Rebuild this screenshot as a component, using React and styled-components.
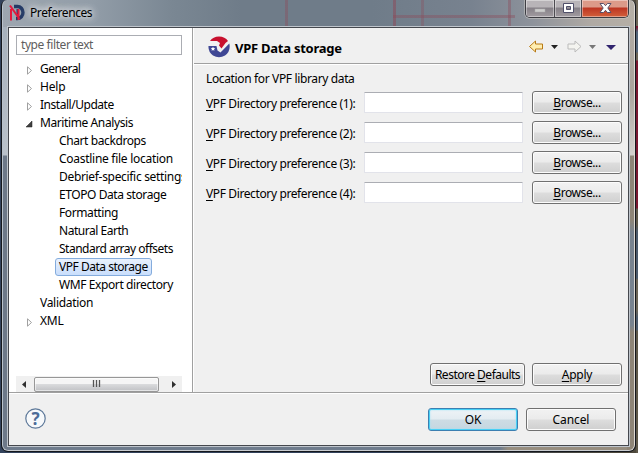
import React from 'react';
import styled, { createGlobalStyle, css } from 'styled-components';

const Global = createGlobalStyle`
  * { box-sizing: border-box; }
  body { margin: 0; overflow: hidden; font: 12px/18px "Noto Sans", "Open Sans", sans-serif; color: #000; }
  u { text-decoration: underline; text-underline-offset: 2px; text-decoration-thickness: 1px; text-decoration-skip-ink: none; }
`;

const Desktop = styled.div`
  width: 638px;
  height: 453px;
  padding: 0 2px 1px 1px;
  background:
    linear-gradient(#6b6455 0 26px, #7a1830 26px 27px, #526478 32px 52px, #6b6455 53px 60px, #7a1830 61px 208px, #5d5748 209px 225px, #4b5a6c 232px 278px, #6b6455 280px 310px, #4b5a6c 318px 330px, #5d5748 331px) 100% 0 / 2px 100% no-repeat,
    linear-gradient(90deg, #33435c 0 60%, #4d483c 97%);
`;

const Dialog = styled.div`
  width: 635px;
  height: 452px;
  display: flex;
  flex-direction: column;
  padding: 0 6px 5px 6px;
  border: 1px solid #15181d;
  border-top: 0;
  border-radius: 6px 6px 7px 7px;
  box-shadow: inset 1px 0 #b9c2cc, inset -1px 0 #dcd8d2, inset 0 -1px #c9ccd0;
  background:
    linear-gradient(90deg, #9da6b0 0, #929da8 90px, #7a8793 170px, #6f7c89 240px 370px, #78828f 470px, #8d929b 530px, #b0aaa4 590px, #b5afa6) 0 0 / 100% 27px no-repeat,
    linear-gradient(#a2adb9, #b9c1ca 155px, #6d7989 156px) 0 0 / 8px 100% no-repeat,
    linear-gradient(#b5afa6, #aaa49c 90px, #d4d1cd 155px, #8e8577 156px 220px, #78838f 232px 325px, #8e8577 332px) 100% 0 / 8px 100% no-repeat,
    linear-gradient(90deg, #6f7c8d 498px, #968d7f 506px);
`;

const TitleBar = styled.header`
  height: 27px;
  flex: none;
  display: flex;
  align-items: flex-start;
  padding-left: 1px;
  background:
    linear-gradient(#8b4b5a66, #8b4b5a66) 277px 0 / 3px 26px no-repeat,
    linear-gradient(#8b4b5a88, #8b4b5a88) 385px 0 / 3px 26px no-repeat,
    linear-gradient(#8b4b5a55, #8b4b5a55) 413px 0 / 3px 26px no-repeat,
    linear-gradient(#8b4b5a66, #8b4b5a66) 385px 15px / 122px 3px no-repeat,
    linear-gradient(#8b4b5a66, #8b4b5a66) 500px 0 / 3px 26px no-repeat;
`;

const AppIcon = styled.svg`
  width: 16px;
  height: 17px;
  margin-top: 4px;
`;

const Title = styled.span`
  margin: 4px 0 0 5px;
  letter-spacing: -0.42px;
  text-shadow: 0 0 6px #ffffffcc, 0 0 9px #ffffffcc, 0 0 12px #ffffff99;
`;

const WindowControls = styled.div`
  display: flex;
  width: 104px;
  height: 18px;
  margin-left: auto;
  border: 1px solid #3d3d43;
  border-top: 0;
  border-radius: 0 0 5px 5px;
  box-shadow: 0 0 0 1px #d0cdca80;
  overflow: hidden;
`;

const Control = styled.div`
  width: ${p => p.$w}px;
  display: flex;
  justify-content: center;
  border-right: ${p => (p.$close ? '0' : '1px solid #4c4a50')};
  box-shadow: inset 0 0 0 1px #ffffff66;
  background: ${p => p.$close
    ? 'linear-gradient(#dc9a89 0 7px, #bd3522 8px, #d2603b)'
    : 'linear-gradient(#b8b4b8 0 7px, #858087 8px, #a29ca1)'};
  svg { display: block; }
`;

const Client = styled.main`
  flex: 1;
  min-height: 0;
  display: flex;
  flex-direction: column;
  border: 1px solid #45484e;
  box-shadow: 0 0 0 1px #bfc5cc;
  background: #f0f0f0;
`;

const Body = styled.div`
  height: 365px;
  flex: none;
  display: flex;
  border-bottom: 1px solid #a0a0a0;
`;

const Sidebar = styled.aside`
  width: 184px;
  padding: 7px 10px 0 7px;
  display: flex;
  flex-direction: column;
  border-right: 1px solid #a0a0a0;
  background: #fff;
`;

const Filter = styled.div`
  height: 20px;
  flex: none;
  padding: 0 4px;
  border: 1px solid #abadb3;
  color: #5e5e5e;
  letter-spacing: -0.42px;
`;

const Tree = styled.div`
  flex: 1;
  padding-top: 5px;
  overflow: hidden;
`;

const TreeRow = styled.div`
  height: 18px;
  display: flex;
  align-items: center;
  padding-left: ${p => (p.$child ? 39 : 10)}px;
  white-space: nowrap;
`;

const Twisty = styled.svg`
  width: 7px;
  height: 9px;
  flex: none;
  margin: 2px 3px 0 0;
`;

const Label = styled.span`
  flex: none;
  height: 18px;
  line-height: 16px;
  padding: 0 3px;
  border: 1px solid transparent;
  border-radius: 3px;
  letter-spacing: ${p => p.$ls ?? -0.4}px;
  ${p => p.$selected && css`
    border-color: #84acdd;
    background: linear-gradient(#e9f1fd, #c9defc);
  `}
`;

const Scrollbar = styled.div`
  height: 16px;
  flex: none;
  display: flex;
  align-items: center;
  background: #f0f0f0;
`;

const Thumb = styled.div`
  width: 125px;
  height: 15px;
  display: flex;
  align-items: center;
  justify-content: center;
  border: 1px solid #979797;
  border-radius: 2px;
  box-shadow: inset 0 0 0 1px #ffffff90;
  background: linear-gradient(#f5f5f5 0 45%, #d9dadc 50%, #c0c1c4);
`;

const ScrollArrow = styled.svg`
  width: 18px;
  height: 15px;
  margin-left: ${p => (p.$end ? 'auto' : '0')};
`;

const Page = styled.section`
  flex: 1;
  display: flex;
  flex-direction: column;
  border-left: 1px solid #fff;
`;

const PageHeader = styled.div`
  height: 36px;
  flex: none;
  display: flex;
  align-items: center;
  padding: 2px 12px 0 14px;
  border-bottom: 1px solid #a0a0a0;
  box-shadow: 0 1px #fff;
`;

const Heading = styled.h1`
  margin: 3px 0 0 5px;
  font-size: 13px;
  line-height: 18px;
  letter-spacing: -0.25px;
`;

const NavTools = styled.svg`
  width: 88px;
  height: 14px;
  margin: -1px 0 0 auto;
`;

const Intro = styled.div`
  margin: 6px 0 3px 12px;
  letter-spacing: -0.36px;
`;

const FieldRow = styled.div`
  height: 30px;
  display: flex;
  align-items: flex-start;
  padding-left: 12px;
`;

const FieldLabel = styled.label`
  width: 158px;
  margin-top: 4px;
  letter-spacing: -0.38px;
  white-space: nowrap;
`;

const Input = styled.div`
  width: 159px;
  height: 21px;
  margin: 1px 9px 0 0;
  border: 1px solid #e2e3ea;
  border-top-color: #abadb3;
  border-radius: 1px;
  background: #fff;
`;

const Button = styled.div`
  width: ${p => p.$w ?? 90}px;
  height: 23px;
  flex: none;
  text-align: center;
  line-height: 22px;
  letter-spacing: ${p => p.$ls ?? -0.1}px;
  white-space: nowrap;
  border: 1px solid #707070;
  border-radius: 3px;
  box-shadow: inset 0 0 0 1px #fcfcfc;
  background: linear-gradient(#f2f2f2 0, #ebebeb 48%, #dddddd 52%, #cfcfcf);
  ${p => p.$primary && css`
    border-color: #3c7fb1;
    box-shadow: inset 0 0 0 1px #48d0f5, inset 0 0 2px 1px #9de3f7;
    background: linear-gradient(#eef3f6 0, #e3ecf1 48%, #cddce4 52%, #c5d6e0);
  `}
`;

const PageActions = styled.div`
  margin: auto 6px 6px auto;
  display: flex;
  gap: 7px;
`;

const Footer = styled.footer`
  flex: 1;
  display: flex;
  align-items: center;
  gap: 8px;
  padding: 0 12px 0 16px;
  box-shadow: inset 0 1px #fff;
`;

const Help = styled.svg`
  width: 21px;
  height: 21px;
  margin: -2px auto 0 0;
`;

const HelpMark = styled.text`
  font: bold 17px "Noto Sans", sans-serif;
  fill: #4d6c98;
`;

const NODES = [
  { text: 'General', icon: 'closed', ls: -0.55 },
  { text: 'Help', icon: 'closed', ls: -0.2 },
  { text: 'Install/Update', icon: 'closed', ls: -0.47 },
  { text: 'Maritime Analysis', icon: 'open' },
  { text: 'Chart backdrops', child: true },
  { text: 'Coastline file location', child: true, ls: -0.28 },
  { text: 'Debrief-specific settings', child: true, ls: -0.32 },
  { text: 'ETOPO Data storage', child: true, ls: -0.42 },
  { text: 'Formatting', child: true },
  { text: 'Natural Earth', child: true, ls: -0.47 },
  { text: 'Standard array offsets', child: true, ls: -0.5 },
  { text: 'VPF Data storage', child: true, selected: true, ls: -0.48 },
  { text: 'WMF Export directory', child: true },
  { text: 'Validation', icon: 'none', ls: -0.3 },
  { text: 'XML', icon: 'closed', ls: -0.2 },
];

const Expander = ({ kind }) => (
  <Twisty viewBox="0 0 7 9">
    {kind === 'closed' && <path d="M1.5.8v7.4l4-3.7z" fill="#fff" stroke="#a0a0a0" />}
    {kind === 'open' && <path d="M6 1v6H0z" fill="#404040" stroke="#222" strokeWidth=".5" />}
  </Twisty>
);

export default function App() {
  return (
    <>
      <Global />
      <Desktop>
        <Dialog>
          <TitleBar>
            <AppIcon viewBox="0 0 16 17">
              <path d="M5 2.500h3.500a5.500 6 0 0 1 0 12H7" fill="none" stroke="#243a66" strokeWidth="3.400" />
              <path d="M8.500 5v6" stroke="#243a66" strokeWidth="2" />
              <path d="M2 16.500V5M1 1.500l9.500 13.500M9.500 16V5" fill="none" stroke="#e4183c" strokeWidth="2" />
            </AppIcon>
            <Title>Preferences</Title>
            <WindowControls>
              <Control $w={29}>
                <svg width="12" height="17"><rect x="1" y="9" width="10" height="3" fill="#ccc" stroke="#aaa" strokeWidth=".5" /></svg>
              </Control>
              <Control $w={27}>
                <svg width="13" height="17"><path d="M1.500 3.500h10v9h-10zM4.500 6.500v3h4v-3z" fill="#fff" fillRule="evenodd" stroke="#50506a" /></svg>
              </Control>
              <Control $w={46} $close>
                <svg width="13" height="17"><path d="M1 3.500h3.500l2 2.200 2-2.200H12L8.800 8 12 12.500H8.500l-2-2.200-2 2.200H1L4.200 8z" fill="#fff" stroke="#59506a" /></svg>
              </Control>
            </WindowControls>
          </TitleBar>
          <Client>
            <Body>
              <Sidebar>
                <Filter>type filter text</Filter>
                <Tree>
                  {NODES.map(n => (
                    <TreeRow key={n.text} $child={n.child}>
                      {!n.child && <Expander kind={n.icon} />}
                      <Label $selected={n.selected} $ls={n.ls}>{n.text}</Label>
                    </TreeRow>
                  ))}
                </Tree>
                <Scrollbar>
                  <ScrollArrow viewBox="0 0 18 15"><path d="M10 4v7L6 7.500z" fill="#303030" /></ScrollArrow>
                  <Thumb>
                    <svg width="9" height="8"><path d="M1.500 0v7M4.500 0v7M7.500 0v7" stroke="#555" strokeWidth="1.300" /></svg>
                  </Thumb>
                  <ScrollArrow $end viewBox="0 0 18 15"><path d="M8 4v7l4-3.500z" fill="#303030" /></ScrollArrow>
                </Scrollbar>
              </Sidebar>
              <Page>
                <PageHeader>
                  <svg width="22" height="22" viewBox="0 0 22 22">
                    <path d="M2 5Q5 .5 11 .5T20 5l-2.500 2-4 5.500-2.500-3 1-2.500-3-2H2z" fill="#c8102e" />
                    <path d="M.5 10h8l1 4.500 3 2L21.300 7.500Q23 15 17 19.500q-6 3.500-12 0Q0 16 .5 10z" fill="#3f4794" />
                    <path d="M5 10.800l.7 1.300 1.500.2-1.100 1 .3 1.500L5 14l-1.400.8.3-1.500-1.100-1 1.500-.2z" fill="#fff" />
                  </svg>
                  <Heading>VPF Data storage</Heading>
                  <NavTools viewBox="0 0 88 14">
                    <path d="M1.500 7.500l6-5.500v3h7v5h-7v3z" fill="#ffeeb0" stroke="#b87a14" />
                    <path d="M23 6h7l-3.500 4z" fill="#222" />
                    <path d="M53 7.500L47 2v3h-7v5h7v3z" fill="#f4f4f0" stroke="#bbb" />
                    <path d="M61 6h7l-3.500 4z" fill="#777" />
                    <path d="M78 6h10l-5 5z" fill="#30246e" />
                  </NavTools>
                </PageHeader>
                <Intro>Location for VPF library data</Intro>
                {[1, 2, 3, 4].map(n => (
                  <FieldRow key={n}>
                    <FieldLabel><u>V</u>PF Directory preference ({n}):</FieldLabel>
                    <Input />
                    <Button $ls={-0.42}><u>B</u>rowse...</Button>
                  </FieldRow>
                ))}
                <PageActions>
                  <Button $w={95} $ls={-0.5}>Restore <u>D</u>efaults</Button>
                  <Button $ls={-0.25}><u>A</u>pply</Button>
                </PageActions>
              </Page>
            </Body>
            <Footer>
              <Help viewBox="0 0 21 21">
                <circle cx="10.500" cy="10.500" r="9.700" fill="#f7f9fb" stroke="#5d7899" strokeWidth="1.200" />
                <HelpMark x="10.500" y="16.500" textAnchor="middle">?</HelpMark>
              </Help>
              <Button $primary>OK</Button>
              <Button>Cancel</Button>
            </Footer>
          </Client>
        </Dialog>
      </Desktop>
    </>
  );
}
